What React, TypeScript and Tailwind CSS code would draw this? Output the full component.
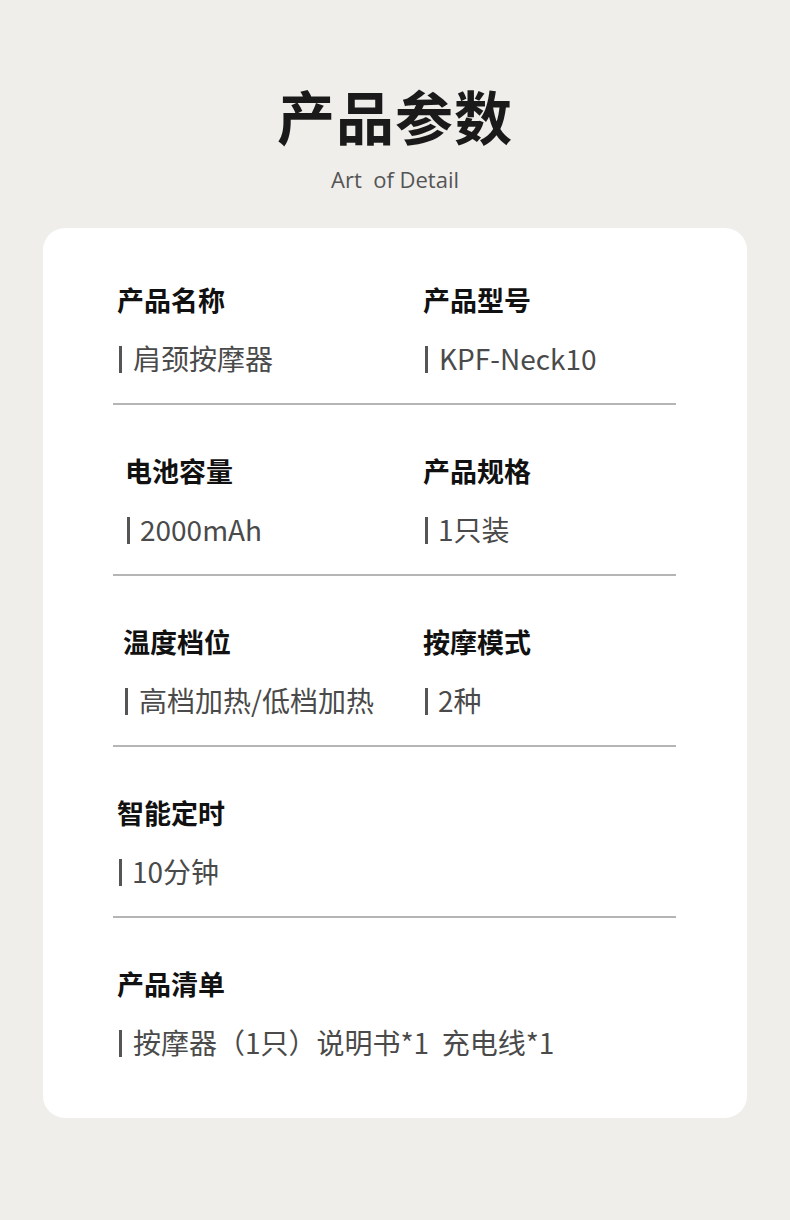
import React from "react";

const font = { fontFamily: '"Noto Sans CJK SC", "Noto Sans", sans-serif' };

type Cell = { label: string; value: string; lx?: string; tight?: boolean };

function Item({ c }: { c: Cell }) {
  return (
    <div className={c.lx ?? ""}>
      <div className="text-[27px] leading-[36px] font-bold text-[#111]">{c.label}</div>
      <div className="mt-[20px] flex items-center text-[28px] leading-[40px] text-[#4a4a4a] whitespace-pre">
        <span className={"shrink-0 inline-block w-[3px] h-[27px] bg-[#555] mt-[2px] ml-[2px] " + (c.tight ? "mr-[10px]" : "mr-[11px]")} />
        <span className="shrink-0">{c.value}</span>
      </div>
    </div>
  );
}

const rows: Cell[][] = [
  [
    { label: "产品名称", value: "肩颈按摩器" },
    { label: "产品型号", value: "KPF-Neck10" },
  ],
  [
    { label: "电池容量", value: "2000mAh", lx: "pl-[8px]", tight: true },
    { label: "产品规格", value: "1只装", tight: true },
  ],
  [
    { label: "温度档位", value: "高档加热/低档加热", lx: "pl-[6px]" },
    { label: "按摩模式", value: "2种", tight: true },
  ],
  [{ label: "智能定时", value: "10分钟", tight: true }],
  [{ label: "产品清单", value: "按摩器（1只）说明书*1  充电线*1" }],
];

export default function App() {
  return (
    <div className="w-[790px] h-[1220px] bg-[#efeeeb] flex flex-col items-center" style={font}>
      <div className="mt-[86px] text-[58px] leading-[58px] font-bold text-[#1a1a1a] tracking-[1px]">产品参数</div>
      <div className="mt-[21px] text-[22px] leading-[28px] text-[#555] whitespace-pre" style={{ fontFamily: '"Open Sans", "Noto Sans", sans-serif' }}>
        Art  of Detail
      </div>
      <div className="mt-[35px] w-[704px] bg-white rounded-[22px] pt-[54px] pb-[56px] pl-[74px]">
        {rows.map((r, i) => (
          <div key={i}>
            <div className="grid grid-cols-[306px_1fr]">
              {r.map((c, j) => (
                <Item key={j} c={c} />
              ))}
            </div>
            {i < rows.length - 1 && (
              <div className="mt-[25px] mb-[48px] ml-[-4px] w-[563px] h-[2px] bg-[#b5b5b5]" />
            )}
          </div>
        ))}
      </div>
    </div>
  );
}
